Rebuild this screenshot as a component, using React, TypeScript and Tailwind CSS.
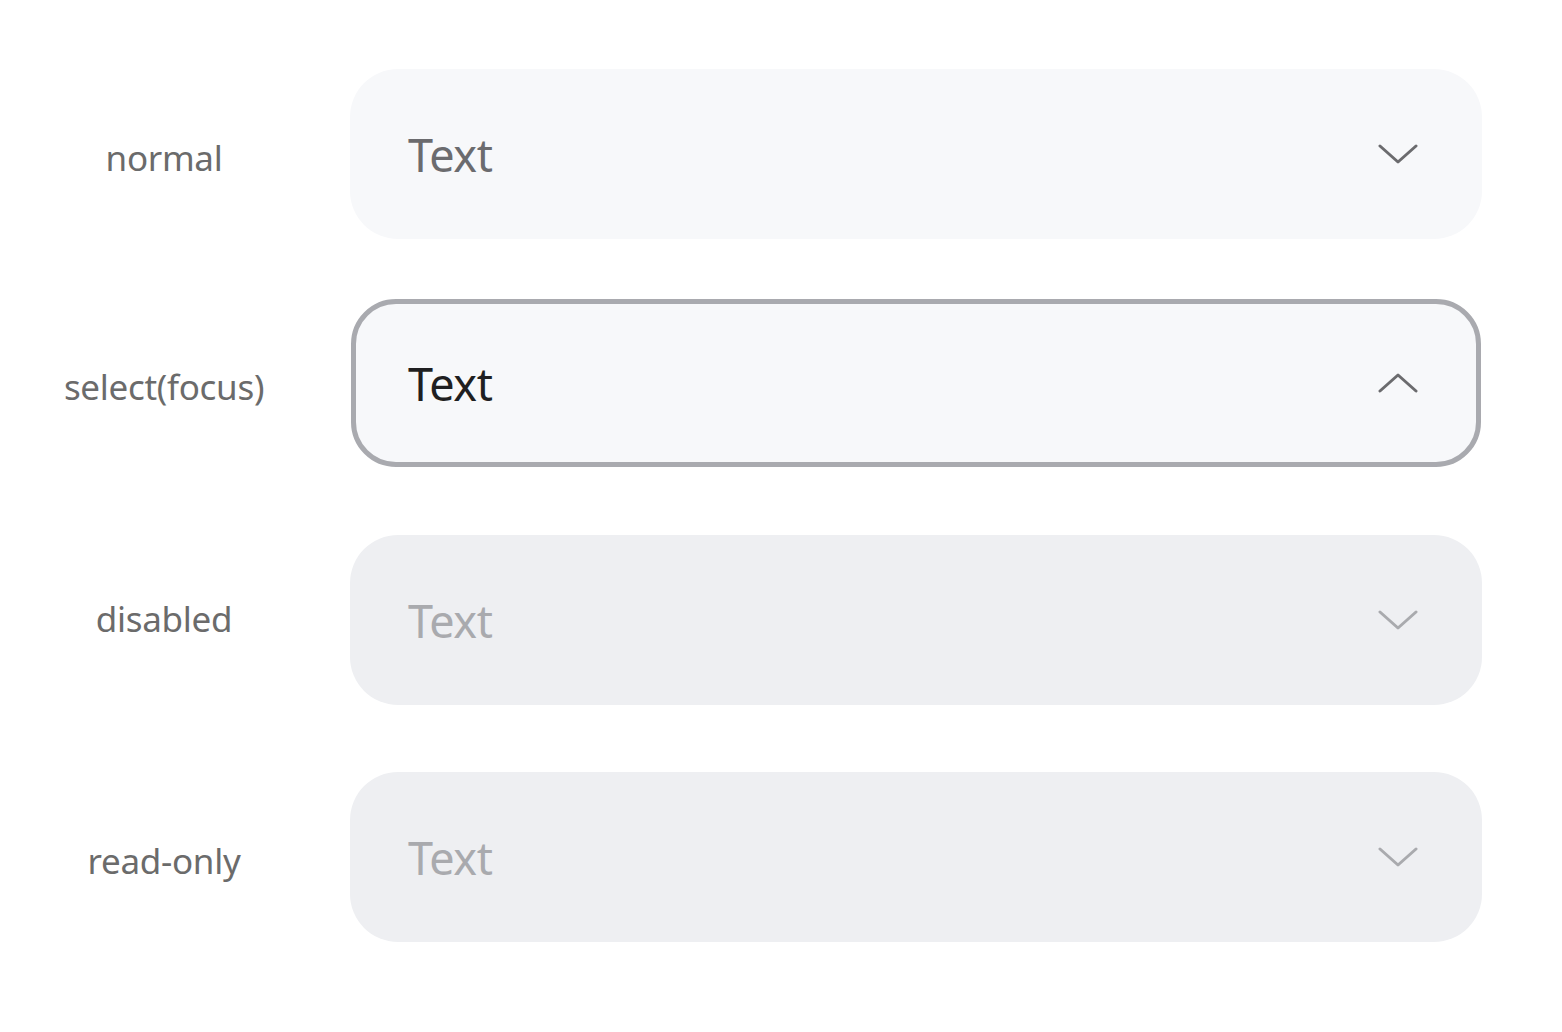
import React from "react";

type State = "normal" | "focus" | "disabled" | "readonly";

const rows: { label: string; state: State; row: string; lbl: string }[] = [
  { label: "normal", state: "normal", row: "", lbl: "pt-[8px]" },
  { label: "select(focus)", state: "focus", row: "mt-[60px]", lbl: "pt-[8px]" },
  { label: "disabled", state: "disabled", row: "mt-[68px]", lbl: "pb-[2px]" },
  { label: "read-only", state: "readonly", row: "mt-[67px]", lbl: "pt-[8px]" },
];

const Chevron = ({ up, color }: { up?: boolean; color: string }) => (
  <svg width="40" height="22" viewBox="0 0 40 22" fill="none">
    <path
      d={up ? "M2 19 L20 3 L38 19" : "M2 3 L20 19 L38 3"}
      stroke={color}
      strokeWidth="3"
      strokeLinecap="round"
      strokeLinejoin="round"
    />
  </svg>
);

function SelectBox({ state }: { state: State }) {
  const muted = state === "disabled" || state === "readonly";
  const box =
    state === "focus"
      ? "bg-[#f7f8fa] border-[5px] border-[#a9aaaf] rounded-[45px] h-[168px] mx-px pl-[52px] pr-[58px]"
      : muted
        ? "bg-[#eeeff2] rounded-[48px] h-[170px] pl-[58px] pr-[64px]"
        : "bg-[#f7f8fa] rounded-[48px] h-[170px] pl-[58px] pr-[64px]";
  const text = state === "focus" ? "text-[#1f1f21]" : muted ? "text-[#a9aaae]" : "text-[#6b6b6e]";
  const chevron = muted ? "#a9aaae" : "#6b6b6e";
  return (
    <div className={`flex flex-1 items-center justify-between ${box}`}>
      <span className={`text-[45px] leading-none tracking-[-0.5px] ${text}`}>Text</span>
      <Chevron up={state === "focus"} color={chevron} />
    </div>
  );
}

export default function App() {
  return (
    <div className="w-[1562px] h-[1032px] bg-white pt-[69px]" style={{ fontFamily: '"Noto Sans", sans-serif' }}>
      <div className="flex flex-col">
        {rows.map((r) => (
          <div key={r.label} className={`flex items-center w-[1482px] ${r.row}`}>
            <div className={`w-[328px] mr-[22px] text-center text-[35px] tracking-[-0.3px] text-[#6b6b6b] ${r.lbl}`}>
              {r.label}
            </div>
            <SelectBox state={r.state} />
          </div>
        ))}
      </div>
    </div>
  );
}
